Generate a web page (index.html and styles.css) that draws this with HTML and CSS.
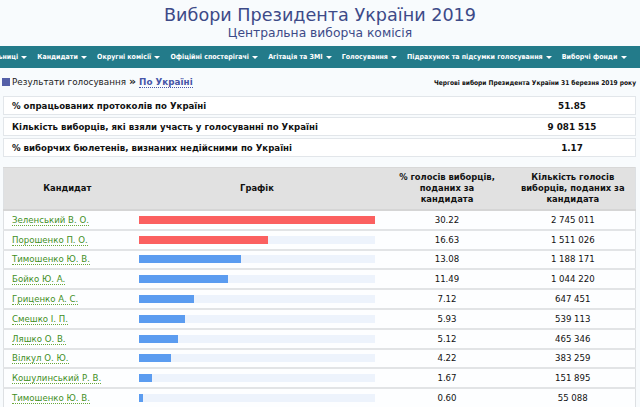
FILE: index.html
```html
<!DOCTYPE html>
<html lang="uk">
<head>
<meta charset="utf-8">
<title>Вибори Президента України 2019</title>
<link rel="stylesheet" href="styles.css">
</head>
<body>
<header class="masthead">
  <h1 class="title">Вибори Президента України 2019</h1>
  <p class="subtitle">Центральна виборча комісія</p>
</header>
<nav class="menu">
  <ul class="menu-list">
    <li>Виборчі дільниці <span class="caret"></span></li>
    <li>Кандидати <span class="caret"></span></li>
    <li>Округні комісії <span class="caret"></span></li>
    <li>Офіційні спостерігачі <span class="caret"></span></li>
    <li>Агітація та ЗМІ <span class="caret"></span></li>
    <li>Голосування <span class="caret"></span></li>
    <li>Підрахунок та підсумки голосування <span class="caret"></span></li>
    <li>Виборчі фонди <span class="caret"></span></li>
  </ul>
</nav>
<div class="crumbs">
  <div class="crumb-path"><span class="crumb-icon"></span>Результати голосування <b class="sep">»</b> <a class="crumb-link" href="#">По Україні</a></div>
  <div class="crumb-note">Чергові вибори Президента України 31 березня 2019 року</div>
</div>
<div class="summary">
  <div class="summary-row"><span class="s-label">% опрацьованих протоколів по Україні</span><span class="s-value">51.85</span></div>
  <div class="summary-row"><span class="s-label">Кількість виборців, які взяли участь у голосуванні по Україні</span><span class="s-value">9 081 515</span></div>
  <div class="summary-row"><span class="s-label">% виборчих бюлетенів, визнаних недійсними по Україні</span><span class="s-value">1.17</span></div>
</div>
<table class="results">
  <colgroup>
    <col class="w-name"><col class="w-graph"><col class="w-pct"><col class="w-cnt">
  </colgroup>
  <thead>
    <tr><th>Кандидат</th><th>Графік</th><th class="h-wrap">% голосів виборців, поданих за кандидата</th><th class="h-wrap">Кількість голосів виборців, поданих за кандидата</th></tr>
  </thead>
  <tbody>
    <tr><td class="c-name"><a href="#">Зеленський В. О.</a></td><td class="c-graph"><div class="track"><div class="bar red" style="width:100%"></div></div></td><td>30.22</td><td>2 745 011</td></tr>
    <tr><td class="c-name"><a href="#">Порошенко П. О.</a></td><td class="c-graph"><div class="track"><div class="bar red" style="width:55.03%"></div></div></td><td>16.63</td><td>1 511 026</td></tr>
    <tr><td class="c-name"><a href="#">Тимошенко Ю. В.</a></td><td class="c-graph"><div class="track"><div class="bar" style="width:43.28%"></div></div></td><td>13.08</td><td>1 188 171</td></tr>
    <tr><td class="c-name"><a href="#">Бойко Ю. А.</a></td><td class="c-graph"><div class="track"><div class="bar" style="width:38.02%"></div></div></td><td>11.49</td><td>1 044 220</td></tr>
    <tr><td class="c-name"><a href="#">Гриценко А. С.</a></td><td class="c-graph"><div class="track"><div class="bar" style="width:23.56%"></div></div></td><td>7.12</td><td>647 451</td></tr>
    <tr><td class="c-name"><a href="#">Смешко І. П.</a></td><td class="c-graph"><div class="track"><div class="bar" style="width:19.62%"></div></div></td><td>5.93</td><td>539 113</td></tr>
    <tr><td class="c-name"><a href="#">Ляшко О. В.</a></td><td class="c-graph"><div class="track"><div class="bar" style="width:16.94%"></div></div></td><td>5.12</td><td>465 346</td></tr>
    <tr><td class="c-name"><a href="#">Вілкул О. Ю.</a></td><td class="c-graph"><div class="track"><div class="bar" style="width:13.96%"></div></div></td><td>4.22</td><td>383 259</td></tr>
    <tr><td class="c-name"><a href="#">Кошулинський Р. В.</a></td><td class="c-graph"><div class="track"><div class="bar" style="width:5.53%"></div></div></td><td>1.67</td><td>151 895</td></tr>
    <tr><td class="c-name"><a href="#">Тимошенко Ю. В.</a></td><td class="c-graph"><div class="track"><div class="bar" style="width:1.99%"></div></div></td><td>0.60</td><td>55 088</td></tr>
  </tbody>
</table>
</body>
</html>
```
FILE: styles.css
```css
html, body {
  margin: 0;
  padding: 0;
}
body {
  background: #f8fbfd;
  font-family: "DejaVu Sans", Verdana, sans-serif;
  color: #111;
  overflow: hidden;
}
.masthead {
  text-align: center;
  padding-top: 5px;
  height: 42px;
  box-sizing: border-box;
}
.title {
  margin: 0;
  font-weight: normal;
  font-size: 17.6px;
  line-height: 21px;
  color: #3d4a88;
}
.subtitle {
  margin: 0;
  font-size: 12.3px;
  line-height: 15px;
  color: #3d4a88;
}
.menu {
  margin-top: 4px;
  background: #237b8a;
  height: 22px;
  overflow: hidden;
}
.menu-list {
  list-style: none;
  margin: 0;
  padding: 0 58px 0 0;
  display: flex;
  justify-content: center;
  gap: 10px;
  white-space: nowrap;
  height: 22px;
  align-items: center;
}
.menu-list li {
  flex: none;
  color: #fff;
  font-family: "DejaVu Sans Condensed", "DejaVu Sans", sans-serif;
  font-size: 7px;
  font-weight: bold;
}
.caret {
  display: inline-block;
  width: 0;
  height: 0;
  border-left: 3px solid transparent;
  border-right: 3px solid transparent;
  border-top: 3px solid #fff;
  vertical-align: middle;
  margin-left: 1px;
}
.crumbs {
  display: flex;
  justify-content: space-between;
  align-items: center;
  padding: 8px 4px 0 2px;
  height: 20px;
  box-sizing: border-box;
}
.crumb-path {
  font-size: 8.8px;
  color: #222;
  display: flex;
  align-items: center;
  gap: 3px;
}
.crumb-icon {
  width: 8px;
  height: 8px;
  background: #5560a8;
  display: inline-block;
  margin-right: -1px;
}
.sep {
  font-size: 11px;
  line-height: 10px;
}
.crumb-link {
  color: #4756a8;
  font-weight: bold;
  text-decoration: none;
  border-bottom: 1px dotted #4756a8;
}
.crumb-note {
  font-family: "DejaVu Sans Condensed", "DejaVu Sans", sans-serif;
  font-size: 6.6px;
  font-weight: bold;
  color: #111;
  padding-top: 2px;
}
.summary {
  margin: 8px 4px 0 3px;
  display: flex;
  flex-direction: column;
  gap: 2px;
}
.summary-row {
  display: grid;
  grid-template-columns: 1fr 126px;
  align-items: center;
  height: 19px;
  background: #fff;
  border: 1px solid #e2e6ea;
  box-sizing: border-box;
  font-size: 8.6px;
  font-weight: bold;
}
.s-label {
  padding-left: 8px;
}
.s-value {
  text-align: center;
  font-size: 8.8px;
}
.results {
  margin: 10px 0 0 3px;
  width: 632px;
  border-collapse: collapse;
  table-layout: fixed;
  font-size: 8.6px;
}
.w-name { width: 127px; }
.w-graph { width: 253px; }
.w-pct { width: 127px; }
.w-cnt { width: 125px; }
.results th {
  background: #e1e1e1;
  height: 41px;
  font-size: 8.4px;
  line-height: 11px;
  font-weight: bold;
  padding: 0 4px;
  border-top: 1px solid #d8d8d8;
  border-bottom: 2px solid #d5d5d5;
}
.results th.h-wrap {
  padding: 0 10px;
}
.results td {
  background: #fdfeff;
  height: 17.8px;
  padding: 0;
  text-align: center;
  border-bottom: 2px solid #e2e4e6;
}
.results tr > *:first-child {
  border-left: 1px solid #dde0e3;
}
.results tr > *:last-child {
  border-right: 1px solid #dde0e3;
}
.results td.c-name {
  text-align: left;
  padding-left: 8px;
}
.results td.c-name a {
  color: #3f8f1e;
  text-decoration: none;
  border-bottom: 1px dotted #6aa83a;
}
.results td.c-graph {
  padding: 0 9px 0 8px;
}
.track {
  height: 8px;
  background: #edf3fc;
}
.bar {
  height: 8px;
  background: #5b9cf0;
}
.bar.red {
  background: #fb6060;
}
```
